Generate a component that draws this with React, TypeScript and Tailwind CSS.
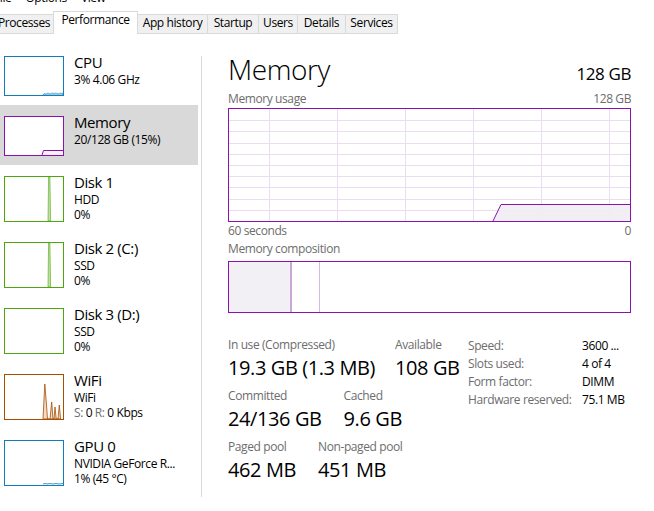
import React from "react";

const FONT = { fontFamily: '"Open Sans", "Noto Sans", Lato, sans-serif', letterSpacing: "-0.025em" };

type Tab = { label: string; w: string; active?: boolean; first?: boolean };

const tabs: Tab[] = [
  { label: "Processes", w: "w-[60px]", first: true },
  { label: "Performance", w: "w-[85px]", active: true },
  { label: "App history", w: "w-[71px]" },
  { label: "Startup", w: "w-[52px]" },
  { label: "Users", w: "w-[40px]" },
  { label: "Details", w: "w-[49px]" },
  { label: "Services", w: "w-[53px]" },
];

function Thumb({ color, h, children }: { color: string; h: number; children?: React.ReactNode }) {
  return (
    <div
      className={`w-[60px] shrink-0 border bg-white ${h === 40 ? "h-[40px]" : "h-[46px]"}`}
      style={{ borderColor: color }}
    >
      <svg width="58" height={h - 2} viewBox={`0 0 58 ${h - 2}`} className="block">
        {children}
      </svg>
    </div>
  );
}

function SideItem({
  thumb,
  title,
  lines,
  selected,
  tall,
}: {
  thumb: React.ReactNode;
  title: string;
  lines: React.ReactNode[];
  selected?: boolean;
  tall?: boolean;
}) {
  return (
    <div
      className={`flex w-[198px] ${tall ? "h-[66px]" : "h-[60px]"} pl-[4px] ${selected ? "bg-[#d9d9d9]" : ""}`}
    >
      <div className="mt-[11px]">{thumb}</div>
      <div className="ml-[10px] pt-[7px] flex flex-col text-black whitespace-nowrap">
        <div className="text-[15px] leading-[20px]">{title}</div>
        {lines.map((l, i) => (
          <div key={i} className="text-[12px] leading-[15px]">
            {l}
          </div>
        ))}
      </div>
    </div>
  );
}

function Stat({ label, value }: { label: string; value: string }) {
  return (
    <div className="flex flex-col whitespace-nowrap">
      <div className="text-[12px] leading-[16px] text-[#6d6d6d]">{label}</div>
      <div className="mt-[1px] text-[20px] leading-[27px] text-black">{value}</div>
    </div>
  );
}

function UsageGraph() {
  const vx = [40, 108, 176, 244, 312, 380];
  const hy = [1, 2, 3, 4, 5, 6, 7, 8, 9].map((k) => Math.round((k * 112) / 10));
  return (
    <div className="w-[403px] h-[114px] border border-[#8b12ae] bg-white">
      <svg width="401" height="112" viewBox="0 0 401 112" className="block" shapeRendering="crispEdges">
        {vx.map((x) => (
          <line key={"v" + x} x1={x + 0.5} y1={0} x2={x + 0.5} y2={112} stroke="#ecdcf1" strokeWidth="1" />
        ))}
        {hy.map((y) => (
          <line key={"h" + y} x1={0} y1={y + 0.5} x2={401} y2={y + 0.5} stroke="#ecdcf1" strokeWidth="1" />
        ))}
        <polygon points="264,112 272,95.5 401,95.5 401,112" fill="#f1edf3" fillOpacity="0.9" />
        <polyline
          points="264,112 272,95.5 401,95.5"
          fill="none"
          stroke="#8b12ae"
          strokeWidth="1"
          shapeRendering="geometricPrecision"
        />
      </svg>
    </div>
  );
}

export default function App() {
  return (
    <div className="w-[654px] h-[511px] overflow-hidden bg-white text-black" style={FONT}>
      {/* menu bar (scrolled mostly out of view) */}
      <div className="flex h-[16px] mt-[-10px] ml-[-6px] gap-[14px] text-[12px] leading-[16px] text-black">
        <span>File</span>
        <span>Options</span>
        <span>View</span>
      </div>

      {/* tabs */}
      <div className="flex items-end h-[23px] mt-[5px] ml-[-6px] text-[12px] leading-[16px]">
        {tabs.map((t) => (
          <div
            key={t.label}
            className={`${t.w} ${t.first ? "" : "-ml-px"} flex justify-center whitespace-nowrap ${
              t.active
                ? "relative z-10 h-[23px] bg-white border border-b-0 border-[#d9d9d9]"
                : "h-[20px] bg-[#f0f0f0] border border-[#d9d9d9]"
            }`}
          >
            {t.label}
          </div>
        ))}
      </div>

      {/* content */}
      <div className="flex h-[477px]">
        {/* sidebar */}
        <div className="w-[198px] pt-[11px] flex flex-col">
          <SideItem
            title="CPU"
            lines={["3% 4.06 GHz"]}
            thumb={
              <Thumb color="#117dbb" h={40}>
                <polygon
                  points="38,38 39,36.5 41,37 43,36 45,37 47,36 49,36.5 51,36 53,37 55,36 57,36.5 58,36 58,38"
                  fill="#dcecf6"
                  stroke="#117dbb"
                  strokeWidth="0.6"
                />
              </Thumb>
            }
          />
          <SideItem
            selected
            title="Memory"
            lines={["20/128 GB (15%)"]}
            thumb={
              <Thumb color="#8b12ae" h={40}>
                <polygon points="37,38 38.5,33.5 58,33.5 58,38" fill="#f4f2f4" />
                <polyline points="37,38 38.5,33.5 58,33.5" fill="none" stroke="#8b12ae" strokeWidth="1" />
              </Thumb>
            }
          />
          <SideItem
            tall
            title="Disk 1"
            lines={["HDD", "0%"]}
            thumb={
              <Thumb color="#4da60c" h={46}>
                <polygon points="43,44 43.6,0 44.9,0 45.6,44" fill="#c3e2ab" stroke="#4da60c" strokeWidth="0.6" />
              </Thumb>
            }
          />
          <SideItem
            tall
            title="Disk 2 (C:)"
            lines={["SSD", "0%"]}
            thumb={
              <Thumb color="#4da60c" h={46}>
                <polygon points="43,44 43.6,0 44.9,0 45.6,44" fill="#c3e2ab" stroke="#4da60c" strokeWidth="0.6" />
              </Thumb>
            }
          />
          <SideItem tall title="Disk 3 (D:)" lines={["SSD", "0%"]} thumb={<Thumb color="#4da60c" h={46} />} />
          <SideItem
            tall
            title="WiFi"
            lines={[
              "WiFi",
              <span key="s">
                <span className="text-[#6d6d6d]">S:</span> 0 <span className="text-[#6d6d6d]">R:</span> 0 Kbps
              </span>,
            ]}
            thumb={
              <Thumb color="#a74f01" h={46}>
                <polygon
                  points="38,44 39.8,9 41.5,30 42.5,44 45,44 46.7,27 48,44 49,44 50,32 51.2,44 53,44 54.3,30 55.6,44"
                  fill="#f3d9c6"
                  stroke="#a74f01"
                  strokeWidth="0.8"
                />
              </Thumb>
            }
          />
          <SideItem
            tall
            title="GPU 0"
            lines={["NVIDIA GeForce R...", "1% (45 °C)"]}
            thumb={
              <Thumb color="#117dbb" h={46}>
                <polyline
                  points="38,43 40,42.5 42,43 45,42.5 48,43 51,42.5 54,43 58,42.5"
                  fill="none"
                  stroke="#117dbb"
                  strokeWidth="0.8"
                />
              </Thumb>
            }
          />
        </div>

        {/* separator */}
        <div className="ml-[3px] mt-[22px] w-px h-[441px] bg-[#dadada]" />

        {/* main pane */}
        <div className="flex-1 pl-[26px] pr-[23px] pt-[17px] flex flex-col">
          <div className="flex items-baseline justify-between">
            <div className="text-[28px] leading-[36px] font-light">Memory</div>
            <div className="text-[17px] leading-[22px]">128 GB</div>
          </div>

          <div className="mt-[4px] flex justify-between text-[12px] leading-[16px] text-[#6d6d6d]">
            <span>Memory usage</span>
            <span>128 GB</span>
          </div>

          <div className="mt-[1px]">
            <UsageGraph />
          </div>

          <div className="mt-[1px] flex justify-between text-[12px] leading-[16px] text-[#6d6d6d]">
            <span>60 seconds</span>
            <span>0</span>
          </div>

          <div className="mt-[2px] text-[12px] leading-[16px] text-[#6d6d6d]">Memory composition</div>

          <div className="mt-[4px] w-[403px] h-[52px] border border-[#8b12ae] flex">
            <div className="w-[61px] h-full bg-[#f3f0f5]" />
            <div className="w-[2px] h-full bg-[#c9a7d6]" />
            <div className="w-[27px] h-full" />
            <div className="w-px h-full bg-[#d6b8e1]" />
          </div>

          <div className="mt-[24px] flex items-start">
            <div className="w-[240px] flex flex-col gap-[7px]">
              <div className="flex gap-[20px]">
                <Stat label="In use (Compressed)" value="19.3 GB (1.3 MB)" />
                <Stat label="Available" value="108 GB" />
              </div>
              <div className="flex gap-[22px]">
                <Stat label="Committed" value="24/136 GB" />
                <Stat label="Cached" value="9.6 GB" />
              </div>
              <div className="flex gap-[22px]">
                <Stat label="Paged pool" value="462 MB" />
                <Stat label="Non-paged pool" value="451 MB" />
              </div>
            </div>
            <div className="grid grid-cols-[114px_auto] content-start text-[12px] leading-[18px] whitespace-nowrap">
              <span className="text-[#6d6d6d]">Speed:</span>
              <span>3600 ...</span>
              <span className="text-[#6d6d6d]">Slots used:</span>
              <span>4 of 4</span>
              <span className="text-[#6d6d6d]">Form factor:</span>
              <span>DIMM</span>
              <span className="text-[#6d6d6d]">Hardware reserved:</span>
              <span>75.1 MB</span>
            </div>
          </div>
        </div>
      </div>
    </div>
  );
}
